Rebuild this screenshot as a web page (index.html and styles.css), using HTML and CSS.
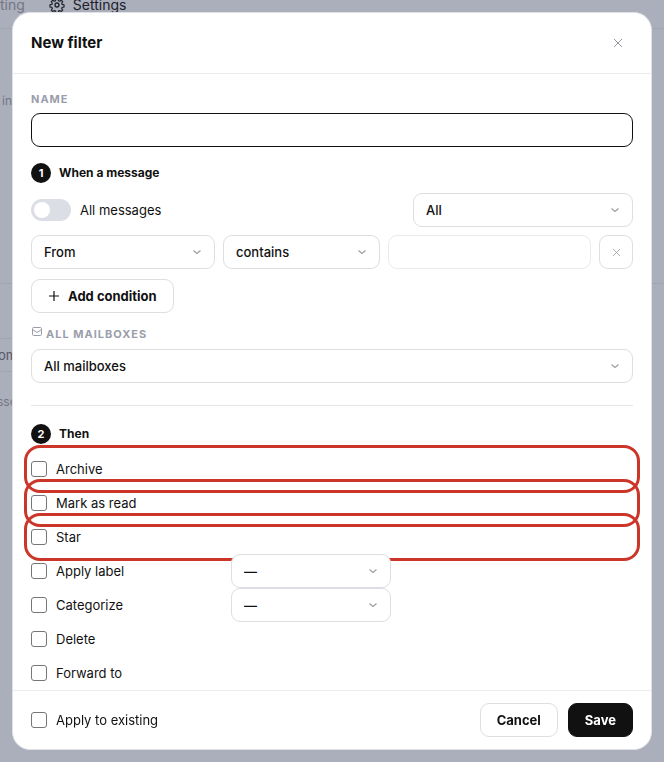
FILE: index.html
```html
<!DOCTYPE html>
<html lang="en">
<head>
	<meta charset="utf-8">
	<meta name="viewport" content="width=device-width, initial-scale=1.0">
	<title>New filter</title>
	<link rel="stylesheet" href="styles.css">
</head>
<body>
<!-- icons used more than once -->
<svg class="sprite" aria-hidden="true">
	<symbol id="chevron" viewBox="0 0 10 10"><path d="M1.5 3.5L5 6.5l3.5-3" fill="none" stroke="currentColor" stroke-width="1.1"/></symbol>
	<symbol id="cross" viewBox="0 0 10 10"><path d="M1 1l8 8M9 1l-8 8" fill="none" stroke="currentColor" stroke-width="0.9"/></symbol>
</svg>

<!-- settings page behind the dialog -->
<div class="page">
	<div class="tabs">
		<span>ting</span>
		<span class="tab active">
			<svg width="16" height="16" viewBox="0 0 24 24" fill="none" stroke="currentColor" stroke-width="2" stroke-linejoin="round"><circle cx="12" cy="12" r="3"/><path d="M10.2 1.8h3.6l.6 3 2 .9 2.6-1.7 2.5 2.5-1.7 2.6.9 2 3 .6v3.6l-3 .6-.9 2 1.7 2.6-2.5 2.5-2.6-1.7-2 .9-.6 3h-3.6l-.6-3-2-.9-2.6 1.7-2.5-2.5 1.7-2.6-.9-2-3-.6v-3.6l3-.6.9-2-1.7-2.6 2.5-2.5 2.6 1.7 2-.9z" transform="translate(1.2 1.2) scale(.9)"/></svg>
			Settings
		</span>
	</div>
	<div class="pageIntro">in</div>
	<div class="pageField">om</div>
	<div class="pageNote">sse</div>
</div>

<div class="overlay">
	<form class="modal" role="dialog" aria-labelledby="modalTitle">
		<div class="modalHeader">
			<h1 id="modalTitle">New filter</h1>
			<button type="button" class="close" aria-label="Close"><svg width="10" height="10"><use href="#cross"/></svg></button>
		</div>

		<div class="modalBody">
			<label class="caption" for="name">NAME</label>
			<input type="text" id="name" class="field nameField">

			<h2 class="step"><span class="stepNumber">1</span>When a message</h2>
			<div class="matchRow">
				<label class="switchLabel"><input type="checkbox" class="switch" role="switch">All messages</label>
				<div class="select matchSelect">
					<select aria-label="Match"><option>All</option><option>Any</option></select>
					<svg width="10" height="10"><use href="#chevron"/></svg>
				</div>
			</div>
			<div class="condition">
				<div class="select">
					<select aria-label="Message part"><option>From</option><option>To</option><option>Subject</option></select>
					<svg width="10" height="10"><use href="#chevron"/></svg>
				</div>
				<div class="select">
					<select aria-label="Comparison"><option>contains</option><option>is</option></select>
					<svg width="10" height="10"><use href="#chevron"/></svg>
				</div>
				<input type="text" class="field" aria-label="Value">
				<button type="button" class="button remove" aria-label="Remove condition"><svg width="9" height="9"><use href="#cross"/></svg></button>
			</div>
			<button type="button" class="button addCondition">
				<svg width="12" height="12" viewBox="0 0 12 12"><path d="M6 1v10M1 6h10" stroke="currentColor" stroke-width="1.2"/></svg>
				Add condition
			</button>

			<label class="caption mailboxCaption" for="mailbox">
				<svg width="12" height="12" viewBox="0 0 12 12" fill="none" stroke="currentColor"><rect x="1.5" y="2.5" width="9" height="8" rx="1.2"/><path d="M1.5 4.5L6 7.5l4.5-3"/></svg>
				ALL MAILBOXES
			</label>
			<div class="select">
				<select id="mailbox"><option>All mailboxes</option></select>
				<svg width="10" height="10"><use href="#chevron"/></svg>
			</div>

			<hr>

			<h2 class="step"><span class="stepNumber">2</span>Then</h2>
			<div class="actions">
				<div class="action marked"><label><input type="checkbox" class="check">Archive</label></div>
				<div class="action marked"><label><input type="checkbox" class="check">Mark as read</label></div>
				<div class="action marked"><label><input type="checkbox" class="check">Star</label></div>
				<div class="action">
					<label><input type="checkbox" class="check">Apply label</label>
					<div class="select">
						<select aria-label="Label"><option>—</option></select>
						<svg width="10" height="10"><use href="#chevron"/></svg>
					</div>
				</div>
				<div class="action">
					<label><input type="checkbox" class="check">Categorize</label>
					<div class="select">
						<select aria-label="Category"><option>—</option></select>
						<svg width="10" height="10"><use href="#chevron"/></svg>
					</div>
				</div>
				<div class="action"><label><input type="checkbox" class="check">Delete</label></div>
				<div class="action"><label><input type="checkbox" class="check">Forward to</label></div>
			</div>
		</div>

		<div class="modalFooter">
			<label><input type="checkbox" class="check">Apply to existing</label>
			<button type="button" class="button">Cancel</button>
			<button type="submit" class="button primary">Save</button>
		</div>
	</form>
</div>
</body>
</html>
```

FILE: styles.css
```css
* {
	box-sizing: border-box;
}
body {
	margin: 0;
	background: #abaebb;
	color: #111;
	font-family: Inter, "Liberation Sans", sans-serif;
	font-size: 13px;
	line-height: 18px;
}
h1, h2 {
	margin: 0;
}
input, select, button {
	margin: 0;
	font: inherit;
	color: inherit;
}
svg {
	flex: none;
}
.sprite {
	display: none;
}

/* page behind */
.page {
	height: 100vh;
	overflow: hidden;
	color: #747785;
}
.tabs {
	display: flex;
	gap: 24px;
	height: 29px;
	border-bottom: 1px solid #a1a4b1;
	font-size: 14px;
	line-height: 10px;
}
.tab {
	display: flex;
	gap: 8px;
}
.tab svg {
	margin-top: -3px;
}
.active {
	color: #20222b;
}
.pageIntro {
	height: 255px;
	padding: 63px 0 0 2px;
	border-bottom: 1px solid #a1a4b1;
	font-size: 12px;
}
.pageField {
	width: 50%;
	height: 34px;
	margin-top: 54px;
	padding-top: 7px;
	border: 1px solid #a1a4b1;
	border-width: 1px 0;
	color: #555864;
	text-indent: -2px;
}
.pageNote {
	margin-top: 21px;
	font-size: 12px;
	text-indent: -3px;
}

/* dialog */
.overlay {
	position: fixed;
	inset: 0;
	display: flex;
	padding: 12px;
}
.modal {
	display: flex;
	flex-direction: column;
	width: 100%;
	max-width: 720px;
	margin: 0 auto;
	background: #fff;
	border: 1px solid #dfe1e6;
	border-radius: 18px;
}
.modalHeader {
	display: flex;
	align-items: center;
	justify-content: space-between;
	height: 61px;
	padding: 0 18px;
	border-bottom: 1px solid #ebecef;
}
.modalHeader h1 {
	font-size: 15px;
	font-weight: 700;
}
.close {
	display: flex;
	padding: 10px;
	background: none;
	border: 0;
	color: #888b92;
}
.modalBody {
	flex: 1;
	min-height: 0;
	padding: 18px 18px 0;
	overflow-y: auto;
	scrollbar-width: none;
}
.caption {
	display: block;
	margin-bottom: 6px;
	color: #9a9eaa;
	font-size: 11px;
	font-weight: 700;
	letter-spacing: 1px;
	line-height: 15px;
}
.field {
	width: 100%;
	height: 34px;
	padding: 0 12px;
	background: #fff;
	border: 1px solid #e9eaed;
	border-radius: 9px;
	outline: none;
}
.nameField {
	display: block;
	margin-bottom: 16px;
	border-color: #111;
}
.step {
	display: flex;
	align-items: center;
	gap: 8px;
	height: 20px;
	font-size: 12px;
	font-weight: 700;
}
.stepNumber {
	width: 20px;
	background: #111;
	border-radius: 50%;
	color: #fff;
	font-size: 11px;
	line-height: 20px;
	text-align: center;
}
.matchRow {
	display: flex;
	align-items: center;
	justify-content: space-between;
	margin: 10px 0 8px;
}
.matchSelect {
	width: 220px;
}
.switchLabel {
	display: flex;
	align-items: center;
	gap: 9px;
}
.switch {
	appearance: none;
	display: flex;
	align-items: center;
	width: 40px;
	height: 22px;
	padding: 3px;
	background: #dcdee5;
	border-radius: 11px;
}
.switch::before {
	content: "";
	width: 16px;
	height: 16px;
	background: #fff;
	border-radius: 50%;
}
.switch:checked {
	justify-content: flex-end;
	background: #111;
}
.select {
	display: grid;
	align-items: center;
}
.select select,
.select svg {
	grid-area: 1 / 1;
}
.select select {
	appearance: none;
	width: 100%;
	height: 34px;
	padding: 0 32px 0 12px;
	background: #fff;
	border: 1px solid #dcdee2;
	border-radius: 9px;
	font-weight: 500;
}
.select svg {
	justify-self: end;
	margin-right: 13px;
	color: #999ca2;
	pointer-events: none;
	z-index: 1;
}
.condition {
	display: grid;
	grid-template-columns: 184px 157px 1fr 34px;
	gap: 8px;
	margin-bottom: 10px;
}
.button {
	display: flex;
	align-items: center;
	justify-content: center;
	height: 34px;
	padding: 0 16px;
	background: #fff;
	border: 1px solid #dcdee2;
	border-radius: 9px;
	font-weight: 700;
}
.remove {
	padding: 0;
	color: #999ca2;
}
.addCondition {
	gap: 8px;
}
.mailboxCaption {
	display: flex;
	gap: 3px;
	margin-top: 12px;
	line-height: 18px;
}
hr {
	height: 1px;
	margin: 22px 0 18px;
	background: #e6e7ea;
	border: 0;
}
.actions {
	margin-top: 8px;
}
.action {
	display: grid;
	grid-template-columns: 200px 160px;
	align-items: center;
	height: 34px;
}
.action label,
.modalFooter label {
	display: flex;
	align-items: center;
	gap: 9px;
}
.marked {
	border-radius: 9px;
	outline: 3px solid #cc3629;
	outline-offset: 4px;
}
.action .select {
	position: relative;
	z-index: 1;
}
.check {
	appearance: none;
	width: 16px;
	height: 16px;
	background: #fff;
	border: 1px solid #767676;
	border-radius: 3px;
}
.check:checked {
	background: #111;
}
.modalFooter {
	display: flex;
	align-items: center;
	gap: 10px;
	padding: 12px 18px;
	border-top: 1px solid #ebecef;
}
.modalFooter label {
	margin-right: auto;
}
.primary {
	background: #111;
	border-color: #111;
	color: #fff;
}
```
